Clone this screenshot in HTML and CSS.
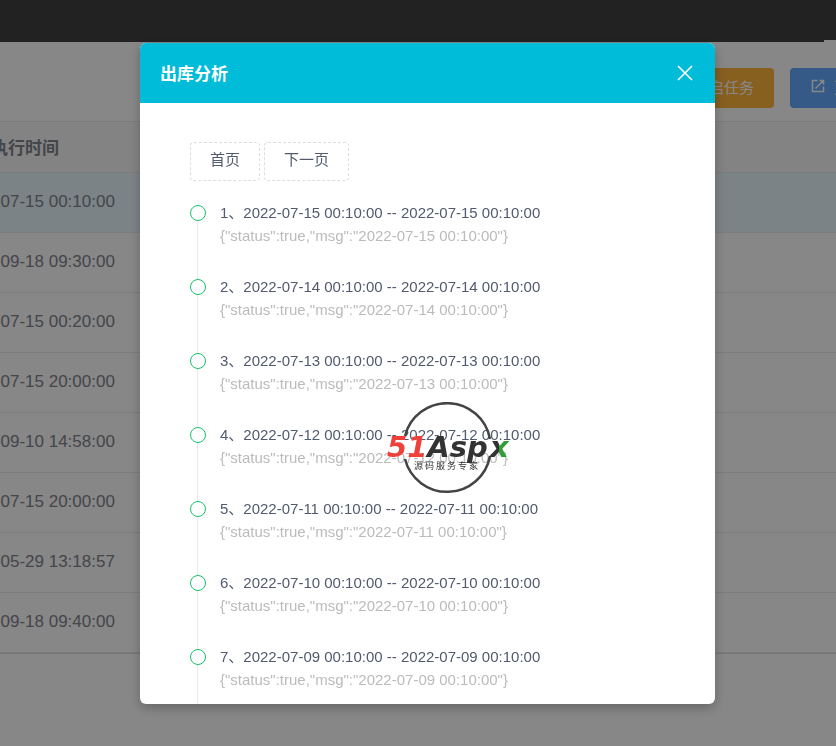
FILE: index.html
```html
<!DOCTYPE html>
<html lang="zh-CN">
<head>
    <meta charset="UTF-8">
    <meta name="viewport" content="width=device-width, initial-scale=1.0">
    <title>出库分析</title>
    <link rel="stylesheet" href="styles.css">
</head>
<body>
    <div class="page">
        <div class="topbar"><span class="tab-line"></span></div>
        <div class="toolbar">
            <button type="button" class="btn btn-warning">开启任务</button>
            <button type="button" class="btn btn-primary">
                <svg width="16" height="16" viewBox="0 0 16 16" fill="none" stroke="currentColor" stroke-width="1.5">
                    <path d="M7.5 2.5H2.5v11h11V8.500M9.500 2.500h4v4M13.500 2.500L5.500 10.500"/>
                </svg>
                <span>更多操作</span>
            </button>
        </div>
        <table class="task-table">
            <thead>
                <tr><th>最后执行时间</th></tr>
            </thead>
            <tbody>
                <tr class="active"><td>2022-07-15 00:10:00</td></tr>
                <tr><td>2021-09-18 09:30:00</td></tr>
                <tr><td>2022-07-15 00:20:00</td></tr>
                <tr><td>2022-07-15 20:00:00</td></tr>
                <tr><td>2021-09-10 14:58:00</td></tr>
                <tr><td>2022-07-15 20:00:00</td></tr>
                <tr><td>2021-05-29 13:18:57</td></tr>
                <tr><td>2021-09-18 09:40:00</td></tr>
            </tbody>
        </table>
    </div>

    <div class="mask">
        <div class="modal" role="dialog" aria-labelledby="modalTitle">
            <div class="modal-header">
                <h2 id="modalTitle">出库分析</h2>
                <button type="button" class="close" aria-label="关闭">
                    <svg width="16" height="16" viewBox="0 0 16 16" fill="none" stroke="currentColor" stroke-width="1.6">
                        <path d="M1 1l14 14M15 1L1 15"/>
                    </svg>
                </button>
            </div>
            <div class="modal-body">
                <div class="pager">
                    <button type="button">首页</button>
                    <button type="button">下一页</button>
                </div>
                <ul class="timeline">
                    <li>
                        <p>1、2022-07-15 00:10:00 -- 2022-07-15 00:10:00</p>
                        <p class="msg">{"status":true,"msg":"2022-07-15 00:10:00"}</p>
                    </li>
                    <li>
                        <p>2、2022-07-14 00:10:00 -- 2022-07-14 00:10:00</p>
                        <p class="msg">{"status":true,"msg":"2022-07-14 00:10:00"}</p>
                    </li>
                    <li>
                        <p>3、2022-07-13 00:10:00 -- 2022-07-13 00:10:00</p>
                        <p class="msg">{"status":true,"msg":"2022-07-13 00:10:00"}</p>
                    </li>
                    <li>
                        <p>4、2022-07-12 00:10:00 -- 2022-07-12 00:10:00</p>
                        <p class="msg">{"status":true,"msg":"2022-07-12 00:10:00"}</p>
                    </li>
                    <li>
                        <p>5、2022-07-11 00:10:00 -- 2022-07-11 00:10:00</p>
                        <p class="msg">{"status":true,"msg":"2022-07-11 00:10:00"}</p>
                    </li>
                    <li>
                        <p>6、2022-07-10 00:10:00 -- 2022-07-10 00:10:00</p>
                        <p class="msg">{"status":true,"msg":"2022-07-10 00:10:00"}</p>
                    </li>
                    <li>
                        <p>7、2022-07-09 00:10:00 -- 2022-07-09 00:10:00</p>
                        <p class="msg">{"status":true,"msg":"2022-07-09 00:10:00"}</p>
                    </li>
                </ul>
            </div>
            <svg class="watermark" width="130" height="92" viewBox="0 0 130 92">
                <defs>
                    <linearGradient id="xFill" x1="0" y1="0" x2="1" y2="0">
                        <stop offset="0.5" stop-color="#333"/>
                        <stop offset="0.5" stop-color="#2f9e36"/>
                    </linearGradient>
                </defs>
                <g fill="none" stroke="#444" stroke-width="2.5">
                    <path d="M19 34A43.500 43.500 0 0 1 104 37"/>
                    <path d="M19 57A43.500 43.500 0 0 0 104 54"/>
                </g>
                <text class="logo-name" x="1" y="55"><tspan fill="#f0403c">51</tspan><tspan fill="#333">Asp</tspan></text>
                <text class="logo-name" x="104" y="55" fill="url(#xFill)">x</text>
                <text class="logo-sub" x="28" y="67">源 码 服 务 专 家</text>
            </svg>
        </div>
    </div>
</body>
</html>
```

FILE: styles.css
```css
/* General */
*,
*::before,
*::after {
    box-sizing: border-box;
}

body {
    margin: 0;
    font-family: "Liberation Sans", "Noto Sans CJK SC", sans-serif;
    font-size: 15px;
    color: #515a6e;
    background-color: #fff;
    overflow: hidden;
}

button {
    font: inherit;
    cursor: pointer;
}

.page {
    height: 100vh;
    overflow: hidden;
}

/* Barra superior */
.topbar {
    display: flex;
    align-items: flex-end;
    justify-content: flex-end;
    height: 42px;
    background-color: #404040;
}

.tab-line {
    width: 12px;
    height: 2px;
    background-color: #fff;
}

.toolbar {
    display: flex;
    justify-content: flex-end;
    gap: 16px;
    height: 80px;
    padding-top: 26px;
    margin-right: -74px;
    border-bottom: 1px solid #e8eaec;
}

.btn {
    display: flex;
    align-items: center;
    gap: 8px;
    height: 40px;
    padding: 0 20px 4px;
    border: none;
    border-radius: 4px;
    color: #fff;
    white-space: nowrap;
}

.btn svg {
    flex: none;
}

.btn-warning {
    background-color: #ffb33c;
}

.btn-primary {
    width: 120px;
    background-color: #64aaff;
}

/* Tabla */
.task-table {
    width: 100%;
    border-collapse: separate;
    border-spacing: 0;
    border-bottom: 1px solid #ddd;
    font-size: 17px;
    color: #80848c;
}

.task-table th,
.task-table td {
    height: 60px;
    padding: 0 0 2px;
    text-align: left;
    text-indent: -43px;
    white-space: nowrap;
    border-bottom: 1px solid #e8eaec;
}

.task-table th {
    height: 51px;
    background-color: #f8f8f9;
}

.task-table .active td {
    background-color: #ebf7ff;
}

/* Modal */
.mask {
    position: fixed;
    inset: 0;
    display: flex;
    padding: 43px 121px 42px 140px;
    background-color: rgba(0, 0, 0, 0.47);
}

.modal {
    position: relative;
    display: flex;
    flex-direction: column;
    flex: 1;
    background-color: #fff;
    border-radius: 6px;
    box-shadow: 0 4px 12px rgba(0, 0, 0, 0.25);
    overflow: hidden;
}

.modal-header {
    display: flex;
    align-items: center;
    justify-content: space-between;
    flex: none;
    height: 60px;
    padding: 0 20px;
    color: #fff;
    background-color: #00bcd8;
}

.modal-header h2 {
    margin: 0;
    padding-bottom: 2px;
    font-size: 17px;
}

.close {
    display: flex;
    padding: 2px;
    border: none;
    color: inherit;
    background: none;
}

.modal-body {
    flex: 1;
    min-height: 0;
    padding: 39px 50px 0;
    overflow: auto;
    scrollbar-width: none;
}

.pager {
    display: flex;
    gap: 4px;
}

.pager button {
    height: 39px;
    padding: 0 19px 6px;
    border: 1px dashed #dcdee2;
    border-radius: 4px;
    color: #515a6e;
    background-color: #fff;
}

/* Linea de tiempo */
.timeline {
    margin: 20px 0 0;
    padding: 0;
    list-style: none;
}

.timeline li {
    position: relative;
    padding: 0 0 28px 30px;
}

.timeline li::before {
    content: "";
    position: absolute;
    top: 12px;
    left: 7px;
    height: 100%;
    border-left: 1px solid #e8eaec;
}

.timeline li::after {
    content: "";
    position: absolute;
    top: 4px;
    left: 0;
    width: 16px;
    height: 16px;
    border: 1px solid #19be6b;
    border-radius: 50%;
    background-color: #fff;
}

.timeline p {
    margin: 0;
    line-height: 23px;
    white-space: nowrap;
}

.timeline .msg {
    color: #bbb;
}

/* Marca de agua */
.watermark {
    position: absolute;
    top: 359px;
    left: 246px;
    pointer-events: none;
}

.logo-name {
    font: italic bold 29px "DejaVu Sans", sans-serif;
}

.logo-sub {
    font: 9px "Noto Sans CJK SC", sans-serif;
    fill: #333;
}
```
